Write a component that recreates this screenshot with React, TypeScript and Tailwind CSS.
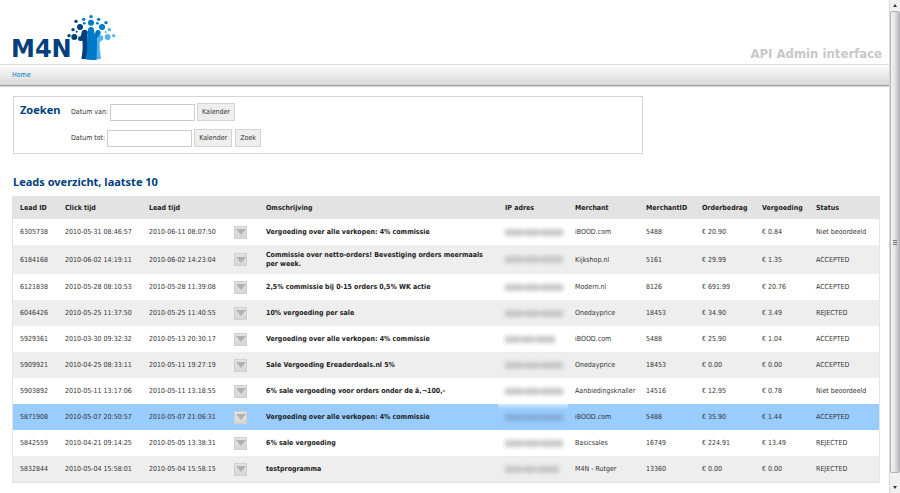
type Lead = {
  id: string;
  click: string;
  lead: string;
  text: string;
  ipWidth: string;
  merchant: string;
  merchantId: string;
  order: string;
  fee: string;
  status: string;
};

const leads: Lead[] = [
  { id: "6305738", click: "2010-05-31 08:46:57", lead: "2010-06-11 08:07:50", text: "Vergoeding over alle verkopen: 4% commissie", ipWidth: "w-[58px]", merchant: "iBOOD.com", merchantId: "5488", order: "€ 20.90", fee: "€ 0.84", status: "Niet beoordeeld" },
  { id: "6184168", click: "2010-06-02 14:19:11", lead: "2010-06-02 14:23:04", text: "Commissie over netto-orders! Bevestiging orders meermaals per week.", ipWidth: "w-[58px]", merchant: "Kijkshop.nl", merchantId: "5161", order: "€ 29.99", fee: "€ 1.35", status: "ACCEPTED" },
  { id: "6121838", click: "2010-05-28 08:10:53", lead: "2010-05-28 11:39:08", text: "2,5% commissie bij 0-15 orders 0,5% WK actie", ipWidth: "w-[58px]", merchant: "Modern.nl", merchantId: "8126", order: "€ 691.99", fee: "€ 20.76", status: "ACCEPTED" },
  { id: "6046426", click: "2010-05-25 11:37:50", lead: "2010-05-25 11:40:55", text: "10% vergoeding per sale", ipWidth: "w-[58px]", merchant: "Onedayprice", merchantId: "18453", order: "€ 34.90", fee: "€ 3.49", status: "REJECTED" },
  { id: "5929361", click: "2010-03-30 09:32:32", lead: "2010-05-13 20:30:17", text: "Vergoeding over alle verkopen: 4% commissie", ipWidth: "w-[50px]", merchant: "iBOOD.com", merchantId: "5488", order: "€ 25.90", fee: "€ 1.04", status: "ACCEPTED" },
  { id: "5909921", click: "2010-04-25 08:33:11", lead: "2010-05-11 19:27:19", text: "Sale Vergoeding Ereaderdeals.nl 5%", ipWidth: "w-[58px]", merchant: "Onedayprice", merchantId: "18453", order: "€ 0.00", fee: "€ 0.00", status: "ACCEPTED" },
  { id: "5903892", click: "2010-05-11 13:17:06", lead: "2010-05-11 13:18:55", text: "6% sale vergoeding voor orders onder de ã‚¬100,-", ipWidth: "w-[58px]", merchant: "Aanbiedingsknaller", merchantId: "14516", order: "€ 12.95", fee: "€ 0.78", status: "Niet beoordeeld" },
  { id: "5871908", click: "2010-05-07 20:50:57", lead: "2010-05-07 21:06:31", text: "Vergoeding over alle verkopen: 4% commissie", ipWidth: "w-[58px]", merchant: "iBOOD.com", merchantId: "5488", order: "€ 35.90", fee: "€ 1.44", status: "ACCEPTED" },
  { id: "5842559", click: "2010-04-21 09:14:25", lead: "2010-05-05 13:38:31", text: "6% sale vergoeding", ipWidth: "w-[58px]", merchant: "Basicsales", merchantId: "16749", order: "€ 224.91", fee: "€ 13.49", status: "REJECTED" },
  { id: "5832844", click: "2010-05-04 15:58:01", lead: "2010-05-04 15:58:15", text: "testprogramma", ipWidth: "w-[54px]", merchant: "M4N - Rutger", merchantId: "13360", order: "€ 0.00", fee: "€ 0.00", status: "REJECTED" },
];

const selectedId = "5871908";

const columns = [
  { label: "Lead ID", width: "w-[45px]" },
  { label: "Click tijd", width: "w-[84px]" },
  { label: "Lead tijd", width: "w-[85px]" },
  { label: "", width: "w-[32px]" },
  { label: "Omschrijving", width: "" },
  { label: "IP adres", width: "w-[70px]" },
  { label: "Merchant", width: "w-[71px]" },
  { label: "MerchantID", width: "w-[56px]" },
  { label: "Orderbedrag", width: "w-[60px]" },
  { label: "Vergoeding", width: "w-[54px]" },
  { label: "Status", width: "w-[70px]" },
];

function Logo() {
  return (
    <svg viewBox="-3 0 113 50" className="h-[50px] w-[113px]" role="img" aria-label="M4N">
      <text x="-2" y="43" fontSize="24" fontWeight="700" fill="#00407f" className="font-['DejaVu_Sans',sans-serif]">
        M4N
      </text>
      <g transform="translate(-13 -12) scale(0.33333)">
        <g fill="#00407f">
          <circle cx="228" cy="58" r="5" />
          <circle cx="240" cy="75" r="9" />
          <circle cx="219" cy="83" r="5" />
          <circle cx="230" cy="89" r="3" />
          <circle cx="207" cy="101" r="5" />
          <circle cx="223" cy="105" r="9" />
          <circle cx="254" cy="92" r="9" />
          <circle cx="241" cy="110" r="7" />
          <path d="M246 90 L262 88 L266 172 L244 171 Q250 140 247 116 L238 114 Z" />
        </g>
        <g fill="#53b1ec">
          <circle cx="317" cy="90" r="3" />
          <circle cx="328" cy="83" r="5" />
          <circle cx="341" cy="101" r="5" />
          <circle cx="323" cy="105" r="9" />
          <circle cx="302" cy="108" r="8" />
          <path d="M288 112 L306 104 L309 112 L299 120 Q298 145 303 170 L286 173 Z" />
        </g>
        <g fill="#0079c8">
          <circle cx="273" cy="44" r="5" />
          <circle cx="251" cy="52" r="5" />
          <circle cx="296" cy="52" r="5" />
          <circle cx="273" cy="62" r="9" />
          <circle cx="253" cy="64" r="4" />
          <circle cx="292" cy="64" r="4" />
          <circle cx="318" cy="62" r="5" />
          <circle cx="306" cy="75" r="9" />
          <circle cx="273" cy="84" r="9" />
          <circle cx="294" cy="92" r="8" />
          <path d="M264 84 L282 84 L284 96 L292 88 L301 96 L291 110 L290 173 Q274 176 257 172 Q264 140 262 108 Z" />
        </g>
      </g>
    </svg>
  );
}

const buttonStyle = "h-[18px] border border-[#d4d4d4] bg-[#eee] px-1 text-[#333]";

function DateField({ id, label, submit }: { id: string; label: string; submit?: boolean }) {
  return (
    <div className="flex h-[18px] items-center">
      <label htmlFor={id} className="mr-[2px]">{label}</label>
      <input id={id} type="text" className="mr-[2px] h-[17px] w-[85px] border border-[#ccc] bg-white px-1 outline-none" />
      <button type="button" className={buttonStyle}>Kalender</button>
      {submit && <button type="submit" className={`${buttonStyle} ml-[3px]`}>Zoek</button>}
    </div>
  );
}

function Scrollbar() {
  return (
    <div aria-hidden="true" className="flex w-[11px] shrink-0 flex-col border-l border-[#d8d8d8] bg-[#f0f0f0]">
      <div className="flex h-[11px] items-center justify-center">
        <svg viewBox="0 0 4 3" className="h-[3px] w-[4px]"><path d="M0 3 L2 0 L4 3Z" fill="#333" /></svg>
      </div>
      <div className="flex flex-1 flex-col items-center justify-center gap-px rounded-[2px] border border-[#b4b4b8] bg-linear-to-r from-[#f4f4f4] via-[#e2e2e6] to-[#bcbcc0]">
        <span className="h-px w-[4px] bg-[#777]" />
        <span className="h-px w-[4px] bg-[#777]" />
        <span className="h-px w-[4px] bg-[#777]" />
      </div>
      <div className="flex h-[20px] items-center justify-center pt-[9px]">
        <svg viewBox="0 0 4 3" className="h-[3px] w-[4px]"><path d="M0 0 L2 3 L4 0Z" fill="#333" /></svg>
      </div>
    </div>
  );
}

/* The IP address is masked: soft blocks, the last one the widest. */
function MaskedIp({ width, selected }: { width: string; selected: boolean }) {
  const tone = selected ? "bg-[#7fa9d4]" : "bg-[#c2c2c2]";
  return (
    <span className={`flex h-[7px] items-center opacity-90 blur-[2px] ${width}`}>
      <span className={`h-[7px] flex-3 ${tone}`} />
      <span className={`h-[5px] flex-1 ${tone}`} />
      <span className={`h-[7px] flex-2 ${tone}`} />
      <span className={`h-[5px] flex-1 ${tone}`} />
      <span className={`h-[7px] flex-4 ${tone}`} />
    </span>
  );
}

function LeadRow({ lead }: { lead: Lead }) {
  const selected = lead.id === selectedId;
  return (
    <tr className={selected ? "h-[26px] bg-[#99ccff]" : "h-[26px] odd:bg-white even:bg-[#eee]"}>
      <td className="pl-[7px]">{lead.id}</td>
      <td className="pl-[7px]">{lead.click}</td>
      <td className="pl-[7px]">{lead.lead}</td>
      <td className="pl-[7px]">
        <button type="button" aria-label={`Acties voor lead ${lead.id}`} className="flex h-[13px] w-[13px] items-center justify-center border border-[#d0d0d0] bg-linear-to-b from-[#e2e2e2] to-[#d6d6d6]">
          <svg viewBox="0 0 10 6" className="h-[6px] w-[10px]"><path d="M0 0H10L5 6Z" fill="#b2b2b2" /></svg>
        </button>
      </td>
      <td className="pt-[6px] pr-[6px] pb-[5px] pl-[7px] leading-[9px] font-bold whitespace-normal text-[#222]">{lead.text}</td>
      <td className={selected ? "bg-linear-to-b from-[#d6ebff] via-[#99ccff] via-20% to-[#99ccff] pl-[7px]" : "pl-[7px]"}>
        <MaskedIp width={lead.ipWidth} selected={selected} />
      </td>
      <td className="pl-[7px]">{lead.merchant}</td>
      <td className="pl-[7px]">{lead.merchantId}</td>
      <td className="pl-[7px]">{lead.order}</td>
      <td className="pl-[7px]">{lead.fee}</td>
      <td className="pl-[7px]">{lead.status}</td>
    </tr>
  );
}

export default function App() {
  return (
    <div className="flex min-h-screen bg-white font-['DejaVu_Sans_Condensed','DejaVu_Sans',sans-serif] text-[7px] leading-[8px] text-[#333]">
      <div className="min-w-0 flex-1">
        <header className="flex h-[64px] items-end justify-between pr-[7px] pt-[13px] pl-[10px]">
          <Logo />
          <h1 className="pb-[2px] text-[13px] leading-[16px] font-bold text-[#c8c8c8]">API Admin interface</h1>
        </header>
        <nav className="flex h-[22px] items-center border-t border-b border-t-[#ddd] border-b-[#999] bg-linear-to-b from-[#fbfbfb] to-[#d9d9d9] pl-[12px] shadow-[0_1px_1px_#ddd]">
          <a href="#home" className="text-[#0079c8]">Home</a>
        </nav>
        <main className="pt-[10px] pr-[10px] pl-[13px]">
          <form className="flex h-[58px] w-[630px] max-w-full border border-[#d4d4d4] pt-[6px] pl-[6px]">
            <h2 className="w-[51px] font-['Noto_Sans',sans-serif] text-[11px] leading-[14px] font-bold text-[#00407f]">Zoeken</h2>
            <div className="flex flex-col gap-[8px]">
              <DateField id="van" label="Datum van:" />
              <DateField id="tot" label="Datum tot:" submit />
            </div>
          </form>
          <h2 className="mt-[21px] font-['Noto_Sans',sans-serif] text-[11px] leading-[14px] font-bold text-[#00407f]">Leads overzicht, laatste 10</h2>
          <table className="mt-[8px] w-full table-fixed border-collapse text-left whitespace-nowrap shadow-[0_0_0_1px_#e4e4e4]">
            <thead>
              <tr className="h-[22px] bg-[#e3e3e3] text-[#222]">
                {columns.map((column, i) => (
                  <th key={i} scope="col" className={`pl-[7px] font-bold ${column.width}`}>{column.label}</th>
                ))}
              </tr>
            </thead>
            <tbody>
              {leads.map((lead) => (
                <LeadRow key={lead.id} lead={lead} />
              ))}
            </tbody>
          </table>
        </main>
      </div>
      <Scrollbar />
    </div>
  );
}
